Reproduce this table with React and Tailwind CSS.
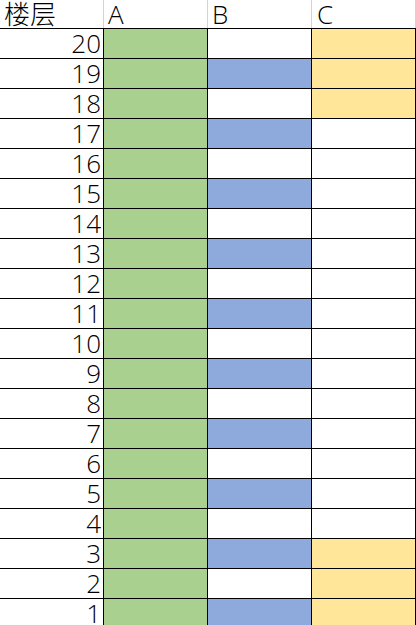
import React from "react";

const floors = Array.from({ length: 20 }, (_, i) => 20 - i);
const yellow = new Set([20, 19, 18, 3, 2, 1]);

export default function App() {
  return (
    <div
      className="w-[416px] h-[625px] overflow-hidden bg-white text-black font-light"
      style={{ fontFamily: '"Open Sans", "Noto Sans CJK SC", sans-serif' }}
    >
      <div className="flex h-[29px] border-b border-black text-[26px] leading-[28px]">
        <div className="w-[104px] border-r border-[#d4d4d4] pl-[4px]">楼层</div>
        <div className="w-[104px] border-r border-[#d4d4d4] pl-[4px]">A</div>
        <div className="w-[104px] border-r border-[#d4d4d4] pl-[4px]">B</div>
        <div className="w-[104px] border-r border-[#d4d4d4] pl-[5px]">C</div>
      </div>
      {floors.map((f) => (
        <div key={f} className="flex h-[30px] shrink-0 border-b border-black text-[26px] leading-[29px]">
          <div className="w-[104px] border-r border-black pr-[2px] text-right">{f}</div>
          <div className="w-[104px] border-r border-black bg-[#a9d08e]" />
          <div className={"w-[104px] border-r border-black " + (f % 2 === 1 ? "bg-[#8ea9db]" : "bg-white")} />
          <div className={"w-[104px] border-r border-black " + (yellow.has(f) ? "bg-[#ffe699]" : "bg-white")} />
        </div>
      ))}
    </div>
  );
}
